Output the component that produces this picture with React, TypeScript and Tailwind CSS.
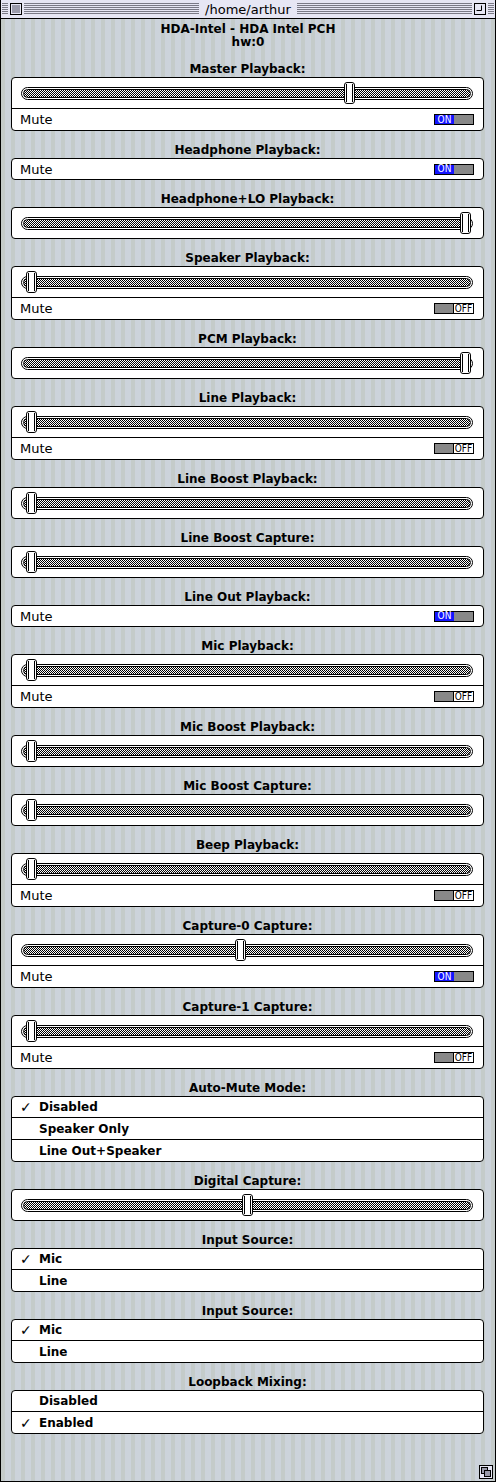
import React from "react";

type Section =
  | { title: string; kind: "slider"; thumb: string; mute?: boolean }
  | { title: string; kind: "mute"; mute: boolean }
  | { title: string; kind: "list"; items: string[]; checked: number };

const sections: Section[] = [
  { title: "Master Playback:", kind: "slider", thumb: "left-[322px]", mute: true },
  { title: "Headphone Playback:", kind: "mute", mute: true },
  { title: "Headphone+LO Playback:", kind: "slider", thumb: "left-[438px]" },
  { title: "Speaker Playback:", kind: "slider", thumb: "left-[4px]", mute: false },
  { title: "PCM Playback:", kind: "slider", thumb: "left-[438px]" },
  { title: "Line Playback:", kind: "slider", thumb: "left-[4px]", mute: false },
  { title: "Line Boost Playback:", kind: "slider", thumb: "left-[4px]" },
  { title: "Line Boost Capture:", kind: "slider", thumb: "left-[4px]" },
  { title: "Line Out Playback:", kind: "mute", mute: true },
  { title: "Mic Playback:", kind: "slider", thumb: "left-[4px]", mute: false },
  { title: "Mic Boost Playback:", kind: "slider", thumb: "left-[4px]" },
  { title: "Mic Boost Capture:", kind: "slider", thumb: "left-[4px]" },
  { title: "Beep Playback:", kind: "slider", thumb: "left-[4px]", mute: false },
  { title: "Capture-0 Capture:", kind: "slider", thumb: "left-[213px]", mute: true },
  { title: "Capture-1 Capture:", kind: "slider", thumb: "left-[4px]", mute: false },
  { title: "Auto-Mute Mode:", kind: "list", items: ["Disabled", "Speaker Only", "Line Out+Speaker"], checked: 0 },
  { title: "Digital Capture:", kind: "slider", thumb: "left-[220px]" },
  { title: "Input Source:", kind: "list", items: ["Mic", "Line"], checked: 0 },
  { title: "Input Source:", kind: "list", items: ["Mic", "Line"], checked: 0 },
  { title: "Loopback Mixing:", kind: "list", items: ["Disabled", "Enabled"], checked: 1 },
];

const stripesH =
  "bg-[repeating-linear-gradient(to_bottom,#7a7a86_0px,#7a7a86_1px,#e6e6f4_1px,#e6e6f4_2px)]";

function Slider({ thumb }: { thumb: string }) {
  return (
    <div className="h-[30px] flex items-center pl-[9px] pr-[10px]">
      <div className="relative w-full h-[13px] rounded-full border border-black bg-white p-[1px]">
        <div className="h-full w-full rounded-full border border-black bg-[repeating-conic-gradient(#000_0_25%,#fff_0_50%)] bg-[length:2px_2px]" />
        <div className={`absolute top-1/2 -translate-y-1/2 ${thumb} w-[11px] h-[22px] rounded-[3px] border border-black bg-white`}>
          <div className="absolute left-[1px] w-[7px] top-[1px] bottom-[1px] border-x border-black" />
        </div>
      </div>
    </div>
  );
}

function Toggle({ on }: { on: boolean }) {
  return (
    <div className="flex h-[11px] w-[40px] border border-black text-[10px] leading-none font-['DejaVu_Sans_Condensed','DejaVu_Sans',sans-serif]">
      {on ? (
        <>
          <div className="w-1/2 bg-[#1414ff] text-white flex items-center justify-center">ON</div>
          <div className="w-1/2 bg-[#888888]" />
        </>
      ) : (
        <>
          <div className="w-1/2 bg-[#888888] border-r border-black" />
          <div className="w-1/2 bg-white text-black flex items-center justify-center">OFF</div>
        </>
      )}
    </div>
  );
}

function MuteRow({ on, first }: { on: boolean; first?: boolean }) {
  return (
    <div
      className={`flex items-center justify-between pl-[8px] pr-[9px] ${
        first ? "h-[20px]" : "h-[22px] border-t border-black"
      }`}
    >
      <span className="text-[13px] leading-none">Mute</span>
      <Toggle on={on} />
    </div>
  );
}

function Box({ s }: { s: Section }) {
  return (
    <div className="rounded-[4px] border border-black bg-white overflow-hidden">
      {s.kind === "slider" && (
        <>
          <Slider thumb={s.thumb} />
          {s.mute !== undefined && <MuteRow on={s.mute} />}
        </>
      )}
      {s.kind === "mute" && <MuteRow on={s.mute} first />}
      {s.kind === "list" &&
        s.items.map((it, i) => (
          <div
            key={it}
            className={`flex items-center pl-[8px] text-[12px] font-bold leading-none ${
              i === 0 ? "h-[20px]" : "h-[22px] border-t border-black"
            }`}
          >
            <span className="w-[19px] text-[14px] font-bold">{i === s.checked ? "✓" : ""}</span>
            <span>{it}</span>
          </div>
        ))}
    </div>
  );
}

export default function App() {
  return (
    <div className="w-[496px] h-[1482px] font-['DejaVu_Sans',sans-serif] text-black border-x border-b border-black flex flex-col bg-[repeating-linear-gradient(to_right,#c4cbca_0px,#c4cbca_4px,#ccd3db_4px,#ccd3db_10px)] relative">
      {/* title bar */}
      <div className="h-[19px] shrink-0 border-b border-black bg-[#e6e6f4] flex items-center pl-[1px] pr-[1px]">
        <div className={`w-[6px] h-[12px] ${stripesH}`} />
        <div className="ml-[2px] w-[12px] h-[12px] border border-black bg-[#e6e6f4] p-[1px]">
          <div className="w-full h-full bg-[#9a9aaa]" />
        </div>
        <div className={`ml-[2px] flex-1 h-[12px] ${stripesH}`} />
        <div className="px-[6px] text-[13px] leading-none">/home/arthur</div>
        <div className={`mr-[2px] flex-1 h-[12px] ${stripesH}`} />
        <div className="w-[12px] h-[12px] border border-black bg-[#e6e6f4]">
          <svg width="10" height="10" viewBox="0 0 10 10">
            <path d="M1.5 6.5 H6.5 V1.5" fill="none" stroke="#000" strokeWidth="1" />
          </svg>
        </div>
        <div className={`ml-[2px] w-[6px] h-[12px] ${stripesH}`} />
      </div>

      {/* header */}
      <div className="h-[31px] shrink-0 pt-[4px] text-center text-[12px] font-bold leading-[13px]">
        <div>HDA-Intel - HDA Intel PCH</div>
        <div>hw:0</div>
      </div>

      <div className="flex flex-col gap-[12px] mt-[12px] pl-[10px] pr-[11px]">
        {sections.map((s, i) => (
          <div key={i}>
            <div className="h-[15px] text-center text-[12px] font-bold leading-[15px]">{s.title}</div>
            <Box s={s} />
          </div>
        ))}
      </div>

      {/* resize box */}
      <div className="absolute right-[2px] bottom-[2px] w-[14px] h-[14px] border border-black bg-[#e6e6f4]">
        <svg width="12" height="12" viewBox="0 0 12 12">
          <rect x="1.5" y="1.5" width="6" height="6" fill="#9a9aaa" stroke="#000" />
          <rect x="4.5" y="4.5" width="6" height="6" fill="#9a9aaa" stroke="#000" />
        </svg>
      </div>
    </div>
  );
}
